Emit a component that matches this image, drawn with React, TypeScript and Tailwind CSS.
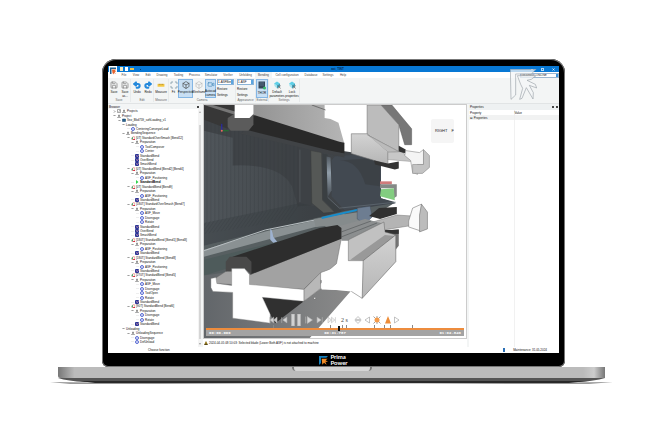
import type { ReactNode } from "react"
import { Box, Maximize, Redo2, Save, Undo2, Video } from "lucide-react"

type Kind = "projects" | "group" | "cube" | "none" | "step" | "bend" | "tool" | "run"

type TreeRow = { level: number; kind: Kind; label: string }

const indents = ["pl-[5px]", "pl-[10px]", "pl-[14px]", "pl-[19px]", "pl-[23px]", "pl-[28px]"]

const row = (level: number, kind: Kind, label: string): TreeRow => ({ level, kind, label })

const bendGroup = (title: string, steps: string[], bends: string[], running = false): TreeRow[] => [
  row(3, "tool", title),
  row(4, "group", "Preparation"),
  ...steps.map((s) => row(5, "step", s)),
  ...bends.map((b) => row(4, running ? "run" : "bend", b)),
]

const treeRows: TreeRow[] = [
  row(0, "projects", "Projects"),
  row(0, "group", "Project"),
  row(1, "cube", "Sez_Bkd759_softLoading_v1"),
  row(2, "none", "Loading"),
  row(3, "step", "CenteringConveyorLoad"),
  row(2, "group", "BendingSequence"),
  ...bendGroup("[0T] StandardOverSmash [Bend12]", ["ToolComposer", "Center"], ["StandardBend", "OverBend", "SmashBend"]),
  ...bendGroup("[0T] StandardBend [Bend2] [Bend4]", ["ASF_Positioning"], ["StandardBend"], true),
  ...bendGroup("[0T] StandardBend [Bend9]", ["ASF_Positioning"], ["StandardBend"]),
  ...bendGroup("[180T] StandardOverSmash [Bend7]", ["ASF_Move", "Disengage", "Rotate"], ["StandardBend", "OverBend", "SmashBend"]),
  ...bendGroup("[180T] StandardBend [Bend1] [Bend3]", ["ASF_Positioning"], ["StandardBend"]),
  ...bendGroup("[180T] StandardBend [Bend8]", ["ASF_Positioning"], ["StandardBend"]),
  ...bendGroup("[270T] StandardBend [Bend5]", ["ASF_Move", "Disengage", "ToolOpen", "Rotate"], ["StandardBend"]),
  ...bendGroup("[90T] StandardBend [Bend6]", ["Disengage", "Rotate"], ["StandardBend"]),
  row(2, "none", "Unloading"),
  row(3, "group", "UnloadingSequence"),
  row(4, "step", "Disengage"),
  row(4, "step", "DefUnload"),
]

function TreeIcon({ kind }: { kind: Kind }) {
  if (kind === "none") return null
  return (
    <svg viewBox="0 0 8 8" className="size-1 shrink-0">
      {kind === "projects" && <path d="M1 1h6v6H1zM3 4l1 1 2-3" fill="#fff" stroke="#555" />}
      {kind === "group" && <path d="M4 1v3M4 4L1 7h6L4 4M2 3h4" fill="none" stroke="#555" strokeWidth="1" />}
      {kind === "cube" && <path d="M1 2h6v5H1z" fill="#28628f" stroke="#123f66" />}
      {kind === "step" && <circle cx="4" cy="4" r="3" fill="#e4e8ff" stroke="#3248c4" strokeWidth="1.6" />}
      {kind === "bend" && (
        <>
          <rect width="8" height="8" rx="2" fill="#2b3596" />
          <path d="M2 3l3 2 2-3" stroke="#e8a8b4" strokeWidth="1.4" fill="none" />
        </>
      )}
      {kind === "tool" && (
        <>
          <path d="M1 7V4l3-3v6z" fill="#5ea06c" />
          <path d="M4 1h3v3z" fill="#e03535" />
          <path d="M3 7l5-2v3H3z" fill="#d62f42" />
        </>
      )}
      {kind === "run" && <path d="M2 0l5 4-5 4z" fill="#2fd14b" />}
    </svg>
  )
}

function BrowserPanel() {
  return (
    <aside className="flex w-[93px] shrink-0 flex-col bg-white">
      <div className="flex h-[5px] items-center justify-between bg-[#f3f5f5] px-px pr-0.5">
        <span className="font-medium">Browser</span>
        <span className="size-0.5 bg-[#444]" />
      </div>
      <div className="flex min-h-0 flex-1">
        <ul className="flex min-w-0 flex-1 flex-col pb-[3px]">
          {treeRows.map((r, i) => {
            const leaf = r.kind === "step" || r.kind === "bend" || r.kind === "run"
            return (
              <li key={i} className={`flex min-h-0 flex-1 items-center gap-px whitespace-nowrap ${indents[r.level]}`}>
                <svg viewBox="0 0 6 6" className="size-[3px] shrink-0">
                  {leaf ? (
                    <path d="M0 3h6" stroke="#ddd" />
                  ) : (
                    <path d={i === 0 ? "M2 1l2 2-2 2" : "M1 2l2 2 2-2"} fill="none" stroke="#444" strokeWidth="1.2" />
                  )}
                </svg>
                <TreeIcon kind={r.kind} />
                {r.kind === "projects" && <TreeIcon kind="group" />}
                <span className={r.kind === "run" ? "font-bold text-black" : ""}>{r.label}</span>
              </li>
            )
          })}
        </ul>
        <div className="flex w-[3px] flex-col items-center justify-between bg-[#f4f4f4] py-0.5">
          <svg viewBox="0 0 4 4" className="size-0.5">
            <path d="M0 3l2-2 2 2z" fill="#666" />
          </svg>
          <span className="mt-3 w-0.5 flex-1 bg-[#d5d5d5]" />
          <svg viewBox="0 0 4 4" className="mt-1 size-0.5">
            <path d="M0 1l2 2 2-2z" fill="#444" />
          </svg>
        </div>
      </div>
    </aside>
  )
}

const menus = [
  ["File", "w-3"],
  ["View", "w-3"],
  ["Edit", "w-3"],
  ["Drawing", "w-4"],
  ["Tooling", "w-[17px]"],
  ["Process", "w-[15px]"],
  ["Simulator", "w-[18px]"],
  ["Verifier", "w-4"],
  ["Unfolding", "w-[19px]"],
  ["Bending", "w-[17px]"],
  ["Cell configuration", "w-[30px]"],
  ["Database", "w-[18px]"],
  ["Settings", "w-4"],
  ["Help", "w-3.5"],
]

function TitleBar() {
  return (
    <header className="relative">
      <div className="flex h-1.5 items-center bg-[#0878d4]">
        <div className="flex flex-1 items-center gap-0.5 pl-3">
          <span className="h-1 w-[3px] bg-[#f5e9bf]" />
          <span className="h-1 w-[3px] bg-white" />
          <span className="h-0.5 w-1 bg-[#f0c64b]" />
          <span className="ml-1 size-px bg-[#0b3d6b]" />
        </div>
        <h1 className="font-bold text-[#06294d]">ast_TINT</h1>
        <div className="flex flex-1 items-center justify-end gap-2 pr-1 text-white">
          <button aria-label="Minimize" className="h-px w-0.5 bg-white" />
          <button aria-label="Restore" className="size-[3px] border border-white/70" />
          <button aria-label="Close">
            <svg viewBox="0 0 6 6" className="size-[3px]">
              <path d="M1 1l4 4M5 1L1 5" stroke="#fff" strokeWidth="1.4" />
            </svg>
          </button>
        </div>
      </div>
      <nav className="flex h-1.5 items-center justify-between bg-white pl-2.5 text-[#444]">
        <div className="flex">
          {menus.map(([name, width]) => (
            <button key={name} className={`h-1.5 whitespace-nowrap text-center ${width} ${name === "Bending" ? "bg-[#f3f5f5]" : ""}`}>
              {name}
            </button>
          ))}
        </div>
        <div className="flex h-[5px] w-[39px] items-center border border-[#9db6cf] bg-white">
          <select aria-label="Server" className="h-[3px] min-w-0 flex-1 appearance-none leading-[3px] text-[#222]">
            <option>(localhost) ONLINE</option>
          </select>
          <span className="h-[3px] w-0.5 bg-[#3b93dc]" />
        </div>
      </nav>
      <svg viewBox="0 0 16 18" className="absolute top-0 left-px h-[9px] w-2">
        <path d="M0 0h16v18H0z" fill="#fff" />
        <path d="M2 3h12v3H5v10H2z" fill="#21618f" />
        <path d="M6 7h8l-2 3 3 1-4 1 3 4-4-2-1 3-2-3z" fill="#e5632d" />
      </svg>
    </header>
  )
}

function Tool({ icon, label, width, active }: { icon: ReactNode; label: string; width: string; active?: boolean }) {
  return (
    <button
      className={`flex h-[19px] shrink-0 flex-col items-center gap-px pt-0.5 ${width} ${
        active ? "border border-[#84b6e4] bg-[#c8dff4] pt-px" : ""
      }`}
    >
      {icon}
      <span className="w-3 text-center">
        <span className="flex flex-col items-center whitespace-nowrap">
          {label.split("|").map((l) => (
            <span key={l}>{l}</span>
          ))}
        </span>
      </span>
    </button>
  )
}

function Group({ name, children }: { name: string; children: ReactNode }) {
  return (
    <section className="flex flex-col justify-between border-r border-[#e7eaeb]">
      <div className="flex">{children}</div>
      <span className="text-center leading-[3px] text-[#666]">{name}</span>
    </section>
  )
}

function Picker({ label, value }: { label: string; value: string }) {
  return (
    <div className="flex w-[19px] flex-col gap-0.5 px-px">
      <div className="flex h-1.5 items-center border border-[#8bb4d8] bg-white">
        <select aria-label={label} className="h-1 min-w-0 flex-1 appearance-none leading-[4px]">
          <option>{value}</option>
        </select>
        <span className="h-1 w-0.5 bg-[#5ba5e0]" />
      </div>
      <button className="text-left">Restore</button>
      <button className="text-left">Settings</button>
    </div>
  )
}

const gem = (
  <svg viewBox="0 0 16 16" className="size-2">
    <path d="M2 5l6-4 6 4-6 5z" fill="#5fd0e8" />
    <path d="M2 5l6 5v5L3 10z" fill="#a5e4ef" />
    <path d="M8 9l6-4v5l-6 5z" fill="#3d9db5" />
    <path d="M10 9l5 6M15 9l-5 6" stroke="#666" strokeWidth="1.5" />
  </svg>
)

function Ribbon() {
  return (
    <div className="flex h-[25px] bg-[#f3f5f5] pt-px pb-px">
      <Group name="Save">
        <Tool width="w-3" label="Save" icon={<Save className="size-2 text-[#777]" />} />
        <Tool width="w-2.5" label="Save|as..." icon={<Save className="size-2 text-[#777]" />} />
      </Group>
      <Group name="Edit">
        <Tool width="w-3" label="Undo" icon={<Undo2 className="size-2 text-[#2489dc]" strokeWidth={6} />} />
        <Tool width="w-2.5" label="Redo" icon={<Redo2 className="size-2 text-[#2489dc]" strokeWidth={6} />} />
      </Group>
      <Group name="Measure">
        <Tool
          width="w-3.5"
          label="Measure"
          icon={
            <svg viewBox="0 0 14 14" className="size-2">
              <path d="M1 5h12v5H1z" fill="#f4c842" />
              <path d="M4 5v2M7 5v2M10 5v2" stroke="#94722b" />
            </svg>
          }
        />
      </Group>
      <Group name="Camera">
        <Tool width="w-[9px]" label="Fit" icon={<Maximize className="size-2 text-[#5c7c90]" />} />
        <Tool active width="w-[15px]" label="Perspective" icon={<Box className="size-2 text-[#444]" />} />
        <Tool width="w-3" label="Wireframe" icon={<Box className="size-2 text-[#888]" strokeWidth={1} />} />
        <Tool active width="w-[11px]" label="Autocad|camera" icon={<Video className="size-2 text-[#357fb2]" />} />
        <Picker label="Camera preset" value="1-ASFBend" />
      </Group>
      <Group name="Appearance">
        <Picker label="Appearance preset" value="1-ASF" />
      </Group>
      <Group name="External">
        <Tool
          active
          width="w-3"
          label="THOR"
          icon={
            <svg viewBox="0 0 16 18" className="h-[9px] w-2">
              <path d="M1 1h13v14H1z" fill="#354759" />
              <path d="M3 4h9M3 8h9" stroke="#7894b0" />
              <circle cx="13" cy="14" r="3" fill="#35bb68" />
            </svg>
          }
        />
      </Group>
      <Group name="Settings">
        <Tool width="w-4" label="Default|parameters" icon={gem} />
        <Tool width="w-3.5" label="Lock|properties" icon={gem} />
      </Group>
    </div>
  )
}

// Press brake tooling seen from the punch side
function Scene() {
  const ribs = Array.from({ length: 24 }, (_, i) => 206 + i * 4)
  return (
    <svg viewBox="203 104 265 235" preserveAspectRatio="none" className="absolute inset-0 size-full">
      <defs>
        <linearGradient id="wall" x1="0" y1="0" x2="1" y2="0">
          <stop offset="0" stopColor="#50565b" />
          <stop offset=".5" stopColor="#42474b" />
          <stop offset=".7" stopColor="#3f4347" />
          <stop offset="1" stopColor="#3f464f" />
        </linearGradient>
        <linearGradient id="beam" x1="0" y1="0" x2="1" y2="0">
          <stop offset="0" stopColor="#8d8d8d" />
          <stop offset="1" stopColor="#b5b5b5" />
        </linearGradient>
        <linearGradient id="block" x1="0" y1="0" x2="0" y2="1">
          <stop offset="0" stopColor="#d3d3d3" />
          <stop offset="1" stopColor="#b5b5b5" />
        </linearGradient>
        <linearGradient id="floor" x1="0" y1="0" x2="1" y2="0">
          <stop offset="0" stopColor="#62666a" />
          <stop offset="1" stopColor="#8a8a8a" />
        </linearGradient>
        <linearGradient id="shine" x1="0" y1="0" x2="0" y2="1">
          <stop offset="0" stopColor="#5a646d" />
          <stop offset=".4" stopColor="#b4c4d2" />
          <stop offset="1" stopColor="#4b535b" />
        </linearGradient>
      </defs>
      <path d="M203 104h265v235H203z" fill="#fff" />
      <path d="M203 110L340 150L382 156V198L397 203L345 214L203 252z" fill="url(#wall)" />
      <path d="M203 130L232 137V165Q280 163 292 186L298 206L312 205V150L250 128L203 112z" fill="#3c4044" opacity=".8" />
      <g stroke="#363a3e" strokeWidth=".5" opacity=".45" fill="none">
        {ribs.map((x) => (
          <path key={x} d={`M${x} ${118 + (x - 203) / 4}V${222 - (x - 203) / 6}l-10 14`} />
        ))}
      </g>
      <path d="M203 223L300 203L345 212L203 246z" fill="#33383c" opacity=".3" />
      <path d="M300 149V202" stroke="#5c6164" strokeWidth=".6" />
      <path d="M311 150L322 152L323 200L335 212L324 213L312 203z" fill="#555856" stroke="#3a3c3c" strokeWidth=".5" />
      <path d="M323 153V199L336 212H343L328 198V154z" fill="#3a3f42" />
      <path d="M335 156L357 154L382 156V198L397 202L345 210L332 196V160z" fill="#424951" />
      <path d="M340 160Q359 160 366 184L381 186V157z" fill="#383c40" opacity=".6" />
      <path d="M327 156L331 157L332 190L328 197z" fill="url(#shine)" opacity=".7" />
      <path d="M328 197L340 208L397 202" stroke="#6b757d" strokeWidth=".6" fill="none" />

      <path d="M203 104H235V113L227 119V128L203 119z" fill="#373737" />
      <path d="M203 104h9l24 7-1 3z" fill="#777" />
      <path d="M235 104H325V117L331 118L339 122L345 143L253 116z" fill="url(#beam)" />
      <path d="M312 104L326 109" stroke="#444" strokeWidth=".6" />
      <path d="M253 114L340 141L345 142V153L330 151L246 130z" fill="#292929" />
      <path d="M246 129L330 150L345 153V157L240 133z" fill="#404346" />
      <path d="M227 117L235 112L253 113V124L248 130H230L227 126z" fill="#5b5b5b" />
      <path d="M234 104H253V113L249 117H234z" fill="#fff" />

      <path d="M382 104H393L413 128V144L406 144L400 124z" fill="#777" stroke="#555" strokeWidth=".5" />
      <path d="M368 104H382L400 124V151L368 134z" fill="#bcbcbc" stroke="#777" strokeWidth=".6" />
      <path d="M352 133H368L389 151V164L352 153z" fill="url(#block)" stroke="#777" strokeWidth=".6" />
      <path d="M368 134L400 151H389" stroke="#888" strokeWidth=".6" fill="#bbb" />
      <path d="M375 160L389 163L400 161V168L396 169L376 164z" fill="#333" />
      <path d="M389 152L403 151L413 161L389 159z" fill="#c7c7c7" stroke="#888" strokeWidth=".5" />
      <path d="M400 145L407 149V153L400 151z" fill="#333" />
      <path d="M407 150L421 152L425 149L425 164H419V174L414 172L412 160L406 155z" fill="#f4f4f4" stroke="#888" strokeWidth=".6" />
      <path d="M425 149L431 155V167L424 173L414 173V164H425z" fill="#c3c3c3" stroke="#888" strokeWidth=".6" />

      <path d="M381 181H393V184H381z" fill="#cf7b7b" />
      <path d="M381 184H398V196L395 198V188H381z" fill="#858987" />
      <path d="M382 189L395 188L396 200L381 196z" fill="#82cd80" />

      <path d="M203 246L345 211L395 203L340 238L203 292z" fill="#575f61" />
      <path d="M203 250L267 231L345 214L346 219L203 257z" fill="#8a9193" />
      <path d="M203 260L273 243L345 224V232L203 276z" fill="#4e5b5b" />
      <path d="M203 251L265 230L320 219" stroke="#b9bfc2" strokeWidth="1" fill="none" />
      <path d="M314 219L360 212L365 219L349 238L325 226L316 227z" fill="#858b8c" />
      <path d="M322 218L366 208" stroke="#178dcc" strokeWidth="2" />
      <path d="M270 229q2 0 3 8l4 5-4 1-3-3z" fill="#9eb2cf" />
      <path d="M358 208L371 206L373 217L366 224L358 219z" fill="#6d7d91" stroke="#475260" strokeWidth=".5" />
      <path d="M370 216L380 208L398 207V214L381 219z" fill="#303030" />
      <path d="M370 223L398 215L414 216L410 226L385 230z" fill="#b4b4b4" stroke="#777" strokeWidth=".5" />
      <path d="M410 221L414 208L423 204L422 217V231L410 227z" fill="#fafafa" stroke="#777" strokeWidth=".6" />
      <path d="M423 204L429 212V229L421 232V215z" fill="#bcbcbc" stroke="#777" strokeWidth=".6" />

      <path d="M203 276L260 268V295L320 280L352 291L310 339H203z" fill="url(#floor)" />
      <path d="M304 302L337 268L350 260L363 299H360L352 292L321 289z" fill="#fff" />
      <path d="M214 279L228 270L250 275L342 238L337 264L330 270L321 273L304 290L214 284z" fill="#a2a2a2" stroke="#666" strokeWidth=".5" />
      <path d="M304 290L321 273V289L304 302z" fill="#b8b8b8" stroke="#666" strokeWidth=".5" />
      <path d="M340 226L366 219L386 224L349 241L342 241z" fill="#8b8e8f" />
      <path d="M342 232L372 221M342 237L378 223" stroke="#5e6263" strokeWidth=".8" />
      <path d="M225 263L232 257L320 228L338 225L342 228V239L250 275V262z" fill="#2d2d2d" />
      <path d="M225 272V262L229 257H246L251 262V275L244 269H232V272z" fill="#494949" />
      <path d="M262 298L304 302L275 324L270 315z" fill="#303030" />
      <path d="M210 279L215 278L216 284L231 286V269H244L249 275V285L304 290V302L262 298L270 315V324L232 319V293L212 292L210 288z" fill="#fff" stroke="#777" strokeWidth=".4" />

      <path d="M386 231L400 229V246L396 251V236z" fill="#747474" />
      <path d="M386 230H400V234L386 234z" fill="#333" />
      <path d="M348 261H364L363 299L353 291L322 290V274L337 267L344 247L349 241z" fill="#fff" />
      <path d="M349 240L385 222L386 232L397 235L364 261H349z" fill="#c1c1c1" stroke="#666" strokeWidth=".5" />
      <path d="M351 260L386 235L396 236L364 261z" fill="#999" />
      <path d="M364 261L397 235V262L363 299z" fill="url(#block)" stroke="#666" strokeWidth=".6" />
      <path d="M352 292L363 299" stroke="#777" strokeWidth=".6" />

      <path d="M221 130V123" stroke="#2525bb" />
      <path d="M221 130h7" stroke="#207a32" />
      <circle cx="221" cy="130" r="1" fill="#e66" />
      <circle cx="315" cy="299" r="1" fill="#fff" stroke="#555" strokeWidth=".5" />
    </svg>
  )
}

const playback = [
  ["Rewind", "M8 2L2 7l6 5zM14 2L8 7l6 5zM1 2v10", "w-2.5"],
  ["Previous step", "M12 2L5 7l7 5zM3 2v10", "w-2"],
  ["Pause", "M2 0h3v14H2zM9 0h3v14H9z", "w-3"],
  ["Play", "M1 1v12M4 1l9 6-9 6z", "w-2.5"],
  ["Next step", "M2 2l7 5-7 5zM11 2v10", "w-2"],
  ["Fast forward", "M0 2l6 5-6 5zM6 2l6 5-6 5zM13 2v10", "w-3"],
]

const marks = ["left-[67px]", "left-[124px]", "left-[136px]", "left-[140px]", "left-[168px]", "left-[178px]", "left-[184px]", "left-[206px]"]

function Player() {
  return (
    <div className="absolute inset-x-0.5 bottom-0.5">
      <div className="flex h-3.5 items-center gap-0.5 pl-[62px]">
        {playback.map(([name, d, width]) => (
          <button key={name} aria-label={name} className={width}>
            <svg viewBox="0 0 14 14" className={name === "Pause" ? "h-3 w-full" : "h-2 w-full"}>
              <path d={d} fill="#eee" fillOpacity=".8" stroke="#bbb" strokeWidth="1" />
            </svg>
          </button>
        ))}
        <span className="ml-px font-['Liberation_Serif',serif] text-[6px] leading-none text-[#444]">2 s</span>
        <button aria-label="Expand" className="ml-1 w-2">
          <svg viewBox="0 0 14 14" className="size-2">
            <path d="M7 1l5 5H2zM7 13l5-5H2z" fill="#fff" stroke="#999" />
          </svg>
        </button>
        <button aria-label="Back" className="w-1.5">
          <svg viewBox="0 0 12 14" className="h-2 w-1.5">
            <path d="M11 1L2 7l9 6z" fill="#fff" stroke="#888" />
          </svg>
        </button>
        <button aria-label="Collisions" className="w-2.5">
          <svg viewBox="0 0 16 16" className="h-2 w-2.5">
            <path d="M1 1l14 14M15 1L1 15M8 0v16" stroke="#444" />
            <circle cx="8" cy="8" r="5" fill="#f59b4a" />
          </svg>
        </button>
        <button aria-label="Warnings" className="w-2">
          <svg viewBox="0 0 14 16" className="size-2">
            <path d="M7 0l6 15H1z" fill="#ee8d38" />
          </svg>
        </button>
        <button aria-label="Forward" className="w-1.5">
          <svg viewBox="0 0 12 14" className="h-2 w-1.5">
            <path d="M1 1l9 6-9 6z" fill="#fff" stroke="#888" />
          </svg>
        </button>
      </div>
      <div className="relative mt-px h-0.5 bg-[#ed8c3d]">
        {marks.map((m) => (
          <span key={m} className={`absolute -top-[3px] h-[3px] w-px bg-[#888] ${m}`} />
        ))}
        <span className="absolute -top-0.5 left-[132px] h-[5px] w-0.5 bg-[#111]" />
      </div>
      <div className="flex h-1.5 items-center justify-between bg-[#a3a3a3] px-[3px] font-['Liberation_Mono',monospace] text-[4px] leading-none font-bold text-white">
        <span>00:00.000</span>
        <span>00:31.787</span>
        <span>01:02.849</span>
      </div>
    </div>
  )
}

function Viewer() {
  return (
    <section className="flex min-w-0 flex-1 flex-col">
      <div className="relative flex-1 overflow-hidden border border-[#ccc]">
        <Scene />
        <div className="absolute top-3.5 right-3 flex h-6 w-[23px] items-center justify-between overflow-hidden rounded-xs bg-[#f5f5f5] pl-1 text-[4px] leading-none text-[#222]">
          <span>RIGHT</span>
          <span>F</span>
        </div>
        <Player />
      </div>
      <div className="flex h-2 items-center gap-px bg-white pl-px">
        <svg viewBox="0 0 10 10" className="size-1">
          <path d="M5 0l5 10H0z" fill="#5c4a13" />
          <path d="M5 3v4" stroke="#f6cb31" strokeWidth="2" />
        </svg>
        <p className="whitespace-nowrap">2024-04-05 08:10:03: Selected blade (Lower Both ASF) is not attached to machine</p>
      </div>
    </section>
  )
}

function PropertiesPanel() {
  return (
    <aside className="flex w-[90px] shrink-0 flex-col bg-white">
      <div className="flex h-1.5 items-center justify-between bg-[#eef1f2] px-px">
        <span>Properties</span>
        <span className="flex gap-0.5">
          <span className="size-0.5 bg-[#444]" />
          <span className="size-0.5 bg-[#444]" />
        </span>
      </div>
      <table className="w-full table-fixed text-left">
        <thead>
          <tr className="h-[5px]">
            <th className="p-0 pl-px font-normal">Property</th>
            <th className="border-l border-[#eee] p-0 font-normal">Value</th>
          </tr>
        </thead>
        <tbody>
          <tr className="h-[5px] bg-[#f1f2f2]">
            <td className="p-0 pl-px">⊟ Properties</td>
            <td className="border-l border-[#eee] p-0" />
          </tr>
        </tbody>
      </table>
      <div className="ml-[45px] flex-1 border-l border-[#f1f1f1]" />
    </aside>
  )
}

function Watermark() {
  return (
    <svg viewBox="0 0 81 93" className="absolute top-[3px] right-[22px] h-[31px] w-[27px]">
      <g fill="#f4f6f7" fillOpacity=".75" stroke="#9da5aa" strokeWidth="2">
        <path d="M1 1H78L64 15H17V78L3 91z" />
        <path d="M22 20H78L64 31L51 34L76 46L80 57L58 49L70 71L69 90L49 56L36 88L29 91L38 58L32 46z" />
      </g>
    </svg>
  )
}

function Lid() {
  return (
    <div className="mr-10 ml-11 flex aspect-[463/308] flex-col rounded-t-[14px] rounded-b-md bg-black px-1.5 pt-[7px] ring-1 ring-[#777] ring-inset">
      <div className="relative flex min-h-0 flex-1 flex-col overflow-hidden bg-white">
        <TitleBar />
        <Ribbon />
        <div className="flex min-h-0 flex-1 gap-0.5 border-t border-[#e1e4e5] bg-[#f3f5f5]">
          <BrowserPanel />
          <Viewer />
          <PropertiesPanel />
        </div>
        <footer className="flex h-1.5 items-center justify-between bg-white pr-3 pl-10">
          <span>Choose function</span>
          <span className="flex items-center gap-2">
            <span className="h-1 w-0.5 bg-[#2c70b6]" />
            <span>Maintenance: 31.05.2024</span>
          </span>
        </footer>
        <Watermark />
      </div>
      <div className="flex h-3.5 items-center justify-center gap-0.5">
        <svg viewBox="0 0 27 27" className="size-[9px]">
          <path d="M0 0h27l-5 5H6v16l-6 6z" fill="#1681bd" />
          <path d="M8 8h18l-6 5 7 5-8-1 4 9-8-6-5 6-1-9z" fill="#f18b25" />
        </svg>
        <p className="flex flex-col font-['Lato',sans-serif] text-[6px] leading-[6px] font-bold text-white">
          <span>Prima</span>
          <span>Power</span>
        </p>
      </div>
    </div>
  )
}

function Base() {
  return (
    <div>
      <div className="flex h-[11px] justify-center rounded-b-xs bg-linear-to-r from-[#777] via-[#bbb] via-3% to-[#bbb]">
        <div className="flex w-full justify-center bg-linear-to-l from-[#777] via-[#ccc] via-2% to-transparent to-4%">
          <div className="h-1 w-20 rounded-b-sm border-x-2 border-[#777] bg-[#d4d4d4]" />
        </div>
      </div>
      <svg viewBox="0 0 564 8" preserveAspectRatio="none" className="-ml-2 block h-2 w-[calc(100%+16px)] max-w-none">
        <path d="M0 4Q282 7 564 4L540 6H20z" fill="#999" />
        <path d="M8 0H556Q545 3 530 4H35Q18 3 8 0z" fill="#555" />
        <path d="M30 3H538L520 5H45z" fill="#292929" />
      </svg>
    </div>
  )
}

export default function App() {
  return (
    <main className="min-h-screen bg-white pt-[59px] pr-[60px] pl-[58px] font-['Liberation_Sans_Narrow','Liberation_Sans',sans-serif] text-[3px] leading-[4px] text-[#111]">
      <Lid />
      <Base />
    </main>
  )
}
